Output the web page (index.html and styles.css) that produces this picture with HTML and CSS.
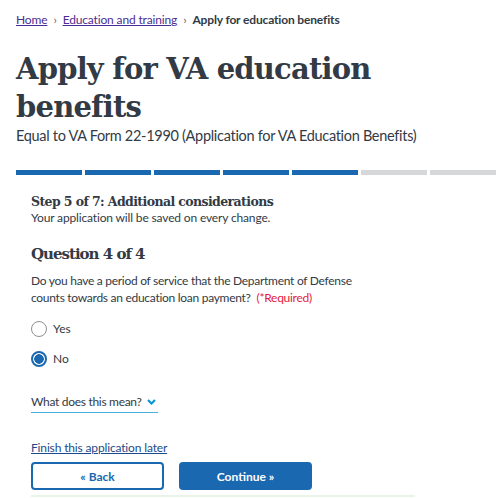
FILE: index.html
```html
<!DOCTYPE html>
<html lang="en">
<head>
<meta charset="utf-8">
<title>Apply for VA education benefits</title>
<link rel="stylesheet" href="styles.css">
</head>
<body>
<div class="page">
  <nav class="crumbs">
    <a href="#">Home</a><span class="sep">›</span><a href="#">Education and training</a><span class="sep">›</span><span class="current">Apply for education benefits</span>
  </nav>
  <h1 class="title">Apply for VA education benefits</h1>
  <p class="subtitle">Equal to VA Form 22-1990 (Application for VA Education Benefits)</p>
  <div class="progress">
    <span class="seg done"></span><span class="seg done"></span><span class="seg done"></span><span class="seg done"></span><span class="seg done"></span><span class="seg"></span><span class="seg"></span>
  </div>
  <div class="form">
    <h2 class="step">Step 5 of 7: Additional considerations</h2>
    <p class="saved">Your application will be saved on every change.</p>
    <h3 class="question">Question 4 of 4</h3>
    <p class="prompt"><span>Do you have a period of service that the Department of Defense</span><br><span>counts towards an education loan payment?</span> <span class="req">(*Required)</span></p>
    <div class="options">
      <label class="option"><span class="radio"></span>Yes</label>
      <label class="option"><span class="radio checked"></span>No</label>
    </div>
    <button class="more" type="button">What does this mean?<svg class="chev" width="9" height="6" viewBox="0 0 9 6"><path d="M1 1 L4.5 4.5 L8 1" fill="none" stroke="#0a95d6" stroke-width="2.2"/></svg></button>
    <a class="later" href="#">Finish this application later</a>
    <div class="buttons">
      <button class="btn back" type="button">« Back</button>
      <button class="btn next" type="button">Continue »</button>
    </div>
    <div class="rule"></div>
  </div>
</div>
</body>
</html>
```
FILE: styles.css
```css
html, body {
  margin: 0;
  padding: 0;
  background: #fff;
}
body {
  font-family: Lato, "Liberation Sans", sans-serif;
  color: #323a45;
}
.page {
  padding: 12px 5px 0 16px;
}
.crumbs {
  font-size: 12px;
  letter-spacing: -0.15px;
  line-height: 16px;
  display: flex;
  align-items: baseline;
}
.crumbs a {
  color: #4c2c92;
}
.crumbs .sep {
  margin: 0 6px;
  font-size: 12px;
  color: #5b616b;
}
.crumbs .current {
  font-weight: 700;
}
.title {
  font-family: "DejaVu Serif", serif;
  font-weight: 700;
  font-size: 29px;
  line-height: 38px;
  margin: 22px 0 0;
  max-width: 420px;
  letter-spacing: -0.8px;
}
.subtitle {
  font-size: 14.5px;
  letter-spacing: -0.3px;
  line-height: 20px;
  margin: 0;
}
.progress {
  display: flex;
  gap: 3px;
  margin-top: 24px;
}
.seg {
  flex: 1;
  height: 5px;
  background: #d6d7d9;
}
.seg.done {
  background: #1a68b0;
}
.form {
  padding: 0 0 0 15px;
}
.step {
  font-family: "DejaVu Serif", serif;
  font-size: 12.5px;
  letter-spacing: -0.6px;
  line-height: 16px;
  margin: 19px 0 0;
}
.saved {
  font-size: 12px;
  letter-spacing: -0.15px;
  line-height: 16px;
  margin: 0;
}
.question {
  font-family: "DejaVu Serif", serif;
  font-size: 15px;
  letter-spacing: -1px;
  line-height: 22px;
  margin: 17px 0 0;
}
.prompt {
  font-size: 12px;
  letter-spacing: -0.28px;
  line-height: 17px;
  margin: 7px 0 0;
  max-width: 360px;
}
.req {
  color: #e31c3d;
  margin-left: 3px;
}
.options {
  display: flex;
  flex-direction: column;
  gap: 14px;
  margin-top: 15px;
}
.option {
  display: flex;
  align-items: center;
  gap: 6px;
  font-size: 12px;
  line-height: 16px;
}
.radio {
  box-sizing: border-box;
  width: 16px;
  height: 16px;
  border-radius: 50%;
  border: 1.5px solid #8f8f8f;
  background: #fff;
}
.radio.checked {
  border: 2px solid #1a68b0;
  background: radial-gradient(circle, #1a68b0 0 4.5px, #fff 5px);
}
.more {
  display: flex;
  align-items: center;
  gap: 5px;
  margin-top: 27px;
  padding: 0 2px 2px 0;
  background: none;
  border: 0;
  border-bottom: 1px solid #46b1e1;
  font-family: inherit;
  font-size: 12px;
  letter-spacing: -0.3px;
  line-height: 16px;
  color: #323a45;
}
.later {
  display: inline-block;
  margin-top: 27px;
  font-size: 12px;
  letter-spacing: -0.15px;
  line-height: 16px;
  color: #1c4a8a;
}
.buttons {
  display: flex;
  gap: 15px;
  margin-top: 6px;
}
.btn {
  box-sizing: border-box;
  width: 133px;
  height: 28px;
  border-radius: 4px;
  font-family: inherit;
  font-weight: 700;
  font-size: 12px;
}
.back {
  background: #fff;
  border: 2px solid #1a68b0;
  color: #1a68b0;
}
.next {
  background: #1a68b0;
  border: 0;
  color: #fff;
}
.rule {
  margin-top: 5px;
  width: 384px;
  height: 2px;
  background: #e8f4e8;
}
```
